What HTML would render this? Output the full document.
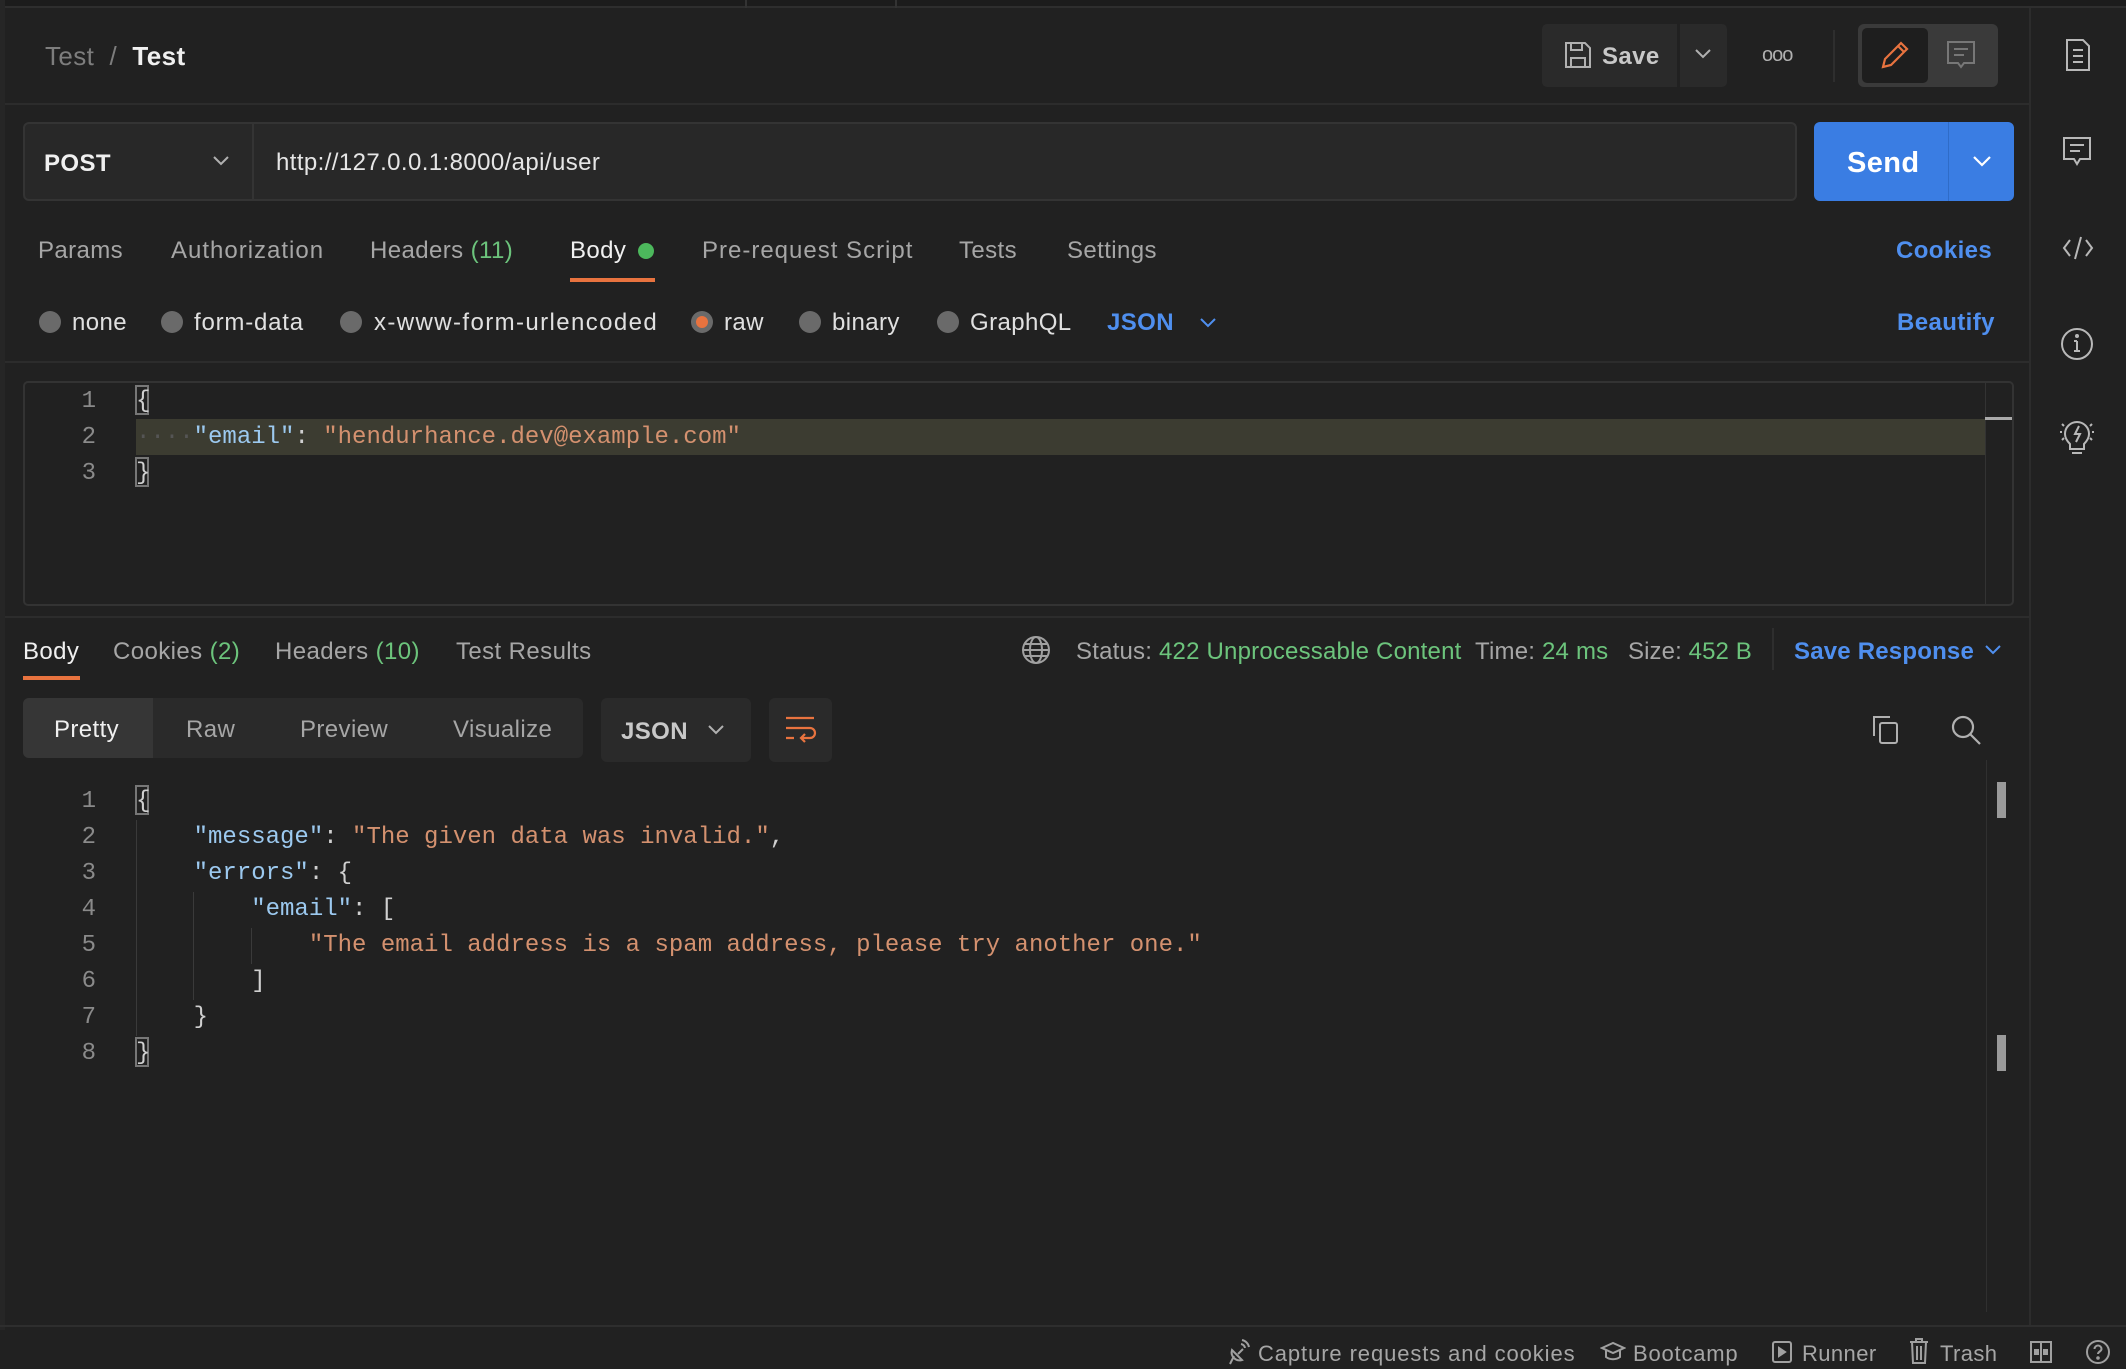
<!DOCTYPE html>
<html><head><meta charset="utf-8"><style>
*{margin:0;padding:0;box-sizing:border-box}
body{width:2126px;height:1368px;background:#212121;position:relative;overflow:hidden;font-family:"Liberation Sans",sans-serif;color:#a6a6a6}
.a{position:absolute;white-space:nowrap}
.t{position:absolute;white-space:nowrap;font-size:24px;line-height:30px;margin-top:2px;letter-spacing:0.4px}
.w{color:#f0f0f0}
.g{color:#6cc47c}
.b{color:#4f8fef}
.m{font-family:"Liberation Mono",monospace;font-size:24px;line-height:36px;position:absolute;white-space:pre;margin-top:3px}
.k{color:#9cc9ef}.s{color:#d4916f}.p{color:#d0d0d0}
.ln{position:absolute;width:60px;text-align:right;font-family:"Liberation Mono",monospace;font-size:24px;line-height:36px;color:#8a8a8a;left:36px;margin-top:3px}
.rd{position:absolute;width:22px;height:22px;border-radius:50%;background:#6a6a6a}
svg{position:absolute}
</style></head><body>
<div class="a" style="left:0;top:0;width:2126px;height:8px;border-bottom:2px solid #2e2e2e;background:#1c1c1c"></div>
<div class="a" style="left:745px;top:0;width:2px;height:8px;background:#333"></div>
<div class="a" style="left:895px;top:0;width:2px;height:8px;background:#333"></div>
<div class="a" style="left:0;top:0;width:5px;height:1330px;background:#262626"></div>
<div class="t" style="left:45px;top:39px;color:#7d7d7d;font-size:26px">Test&nbsp;&nbsp;/&nbsp;&nbsp;<span class="w" style="font-weight:bold">Test</span></div>
<div class="a" style="left:1542px;top:24px;width:135px;height:63px;background:#2a2a2a;border-radius:5px 0 0 5px"></div>
<div class="a" style="left:1680px;top:24px;width:47px;height:63px;background:#2a2a2a;border-radius:0 5px 5px 0"></div>
<svg style="left:1563px;top:40px" width="30" height="30" viewBox="0 0 30 30" fill="none" stroke="#b0b0b0" stroke-width="2"><path d="M3 3h19l5 5v19H3z M8 3v7h11V3 M8 27v-9h14v9"/></svg>
<div class="t" style="left:1602px;top:40px;color:#c8c8c8;font-weight:bold">Save</div>
<svg style="left:1693px;top:47px" width="20" height="14" viewBox="0 0 20 14" fill="none" stroke="#b0b0b0" stroke-width="2"><path d="M3 3l7 7 7-7"/></svg>
<div class="t" style="left:1762px;top:38px;font-size:20px;color:#b0b0b0;letter-spacing:-1px">ooo</div>
<div class="a" style="left:1833px;top:30px;width:2px;height:52px;background:#2e2e2e"></div>
<div class="a" style="left:1858px;top:24px;width:140px;height:63px;background:#3a3a3a;border-radius:6px"></div>
<div class="a" style="left:1862px;top:28px;width:66px;height:55px;background:#1e1e1e;border-radius:5px"></div>
<svg style="left:1878px;top:38px" width="34" height="34" viewBox="0 0 34 34" fill="none" stroke="#e8733f" stroke-width="2.2"><path d="M5 29l2-8L23 5l6 6-16 16z M20 8l6 6"/></svg>
<svg style="left:1946px;top:40px" width="30" height="32" viewBox="0 0 30 32" fill="none" stroke="#777" stroke-width="2"><path d="M2 2h26v21H18l-3 4-3-4H2z M8 9h14 M8 15h10"/></svg>
<div class="a" style="left:5px;top:103px;width:2025px;height:2px;background:#2c2c2c"></div>
<div class="a" style="left:2029px;top:8px;width:2px;height:1318px;background:#2c2c2c"></div>
<svg style="left:2063px;top:38px" width="30" height="34" viewBox="0 0 30 34" fill="none" stroke="#b8b8b8" stroke-width="2"><path d="M4 2h16l6 6v24H4z M10 12h10 M10 18h10 M10 24h10"/></svg>
<svg style="left:2062px;top:136px" width="30" height="34" viewBox="0 0 30 34" fill="none" stroke="#b8b8b8" stroke-width="2"><path d="M2 2h26v21H18l-3 5-3-5H2z M8 9h14 M8 15h10"/></svg>
<svg style="left:2062px;top:234px" width="32" height="28" viewBox="0 0 32 28" fill="none" stroke="#b8b8b8" stroke-width="2"><path d="M8 6L2 14l6 8 M24 6l6 8-6 8 M19 3l-6 22"/></svg>
<svg style="left:2060px;top:327px" width="34" height="34" viewBox="0 0 34 34" fill="none" stroke="#b8b8b8" stroke-width="2"><circle cx="17" cy="17" r="15"/><path d="M17 14v10 M14 24h6 M14 14h3"/><circle cx="17" cy="9" r="1" fill="#b8b8b8"/></svg>
<svg style="left:2058px;top:418px" width="38" height="40" viewBox="0 0 38 40" fill="none" stroke="#b8b8b8" stroke-width="2"><path d="M12 26c-3-3-5-6-5-10a12 12 0 0124 0c0 4-2 7-5 10v5H12z M14 35h10 M21 8l-4 8h5l-4 8 M2 14h2 M34 14h2 M4 6l2 2 M34 6l-2 2 M4 22l2-2 M34 22l-2-2"/></svg>
<div class="a" style="left:23px;top:122px;width:1774px;height:79px;background:#282828;border:2px solid #343434;border-radius:6px"></div>
<div class="a" style="left:252px;top:124px;width:2px;height:75px;background:#343434"></div>
<div class="t w" style="left:44px;top:147px;font-weight:bold">POST</div>
<svg style="left:211px;top:154px" width="20" height="14" viewBox="0 0 20 14" fill="none" stroke="#b0b0b0" stroke-width="2"><path d="M3 3l7 7 7-7"/></svg>
<div class="t" style="left:276px;top:146px;color:#e6e6e6">http://127.0.0.1:8000/api/user</div>
<div class="a" style="left:1814px;top:122px;width:200px;height:79px;background:#3a7de3;border-radius:6px"></div>
<div class="a" style="left:1948px;top:122px;width:1px;height:79px;background:#2f6cc8"></div>
<div class="t" style="left:1847px;top:146px;color:#fff;font-weight:bold;font-size:29px">Send</div>
<svg style="left:1971px;top:154px" width="22" height="14" viewBox="0 0 22 14" fill="none" stroke="#fff" stroke-width="2.2"><path d="M3 3l8 8 8-8"/></svg>
<div class="t" style="left:38px;top:234px">Params</div>
<div class="t" style="left:171px;top:234px;letter-spacing:1px">Authorization</div>
<div class="t" style="left:370px;top:234px">Headers <span class="g">(11)</span></div>
<div class="t w" style="left:570px;top:234px">Body</div>
<div class="a" style="left:638px;top:243px;width:16px;height:16px;border-radius:50%;background:#4cb85c"></div>
<div class="a" style="left:570px;top:278px;width:85px;height:4px;background:#e8733f"></div>
<div class="t" style="left:702px;top:234px;letter-spacing:1px">Pre-request Script</div>
<div class="t" style="left:959px;top:234px">Tests</div>
<div class="t" style="left:1067px;top:234px">Settings</div>
<div class="t b" style="left:1896px;top:234px;font-weight:bold">Cookies</div>
<div class="rd" style="left:39px;top:311px"></div><div class="t" style="left:72px;top:306px;color:#e0e0e0">none</div>
<div class="rd" style="left:161px;top:311px"></div><div class="t" style="left:194px;top:306px;color:#e0e0e0;letter-spacing:0.8px">form-data</div>
<div class="rd" style="left:340px;top:311px"></div><div class="t" style="left:374px;top:306px;color:#e0e0e0;letter-spacing:1.4px">x-www-form-urlencoded</div>
<div class="rd" style="left:691px;top:311px"></div><div class="a" style="left:696px;top:316px;width:12px;height:12px;border-radius:50%;background:#e8733f"></div><div class="t" style="left:724px;top:306px;color:#e0e0e0">raw</div>
<div class="rd" style="left:799px;top:311px"></div><div class="t" style="left:832px;top:306px;color:#e0e0e0">binary</div>
<div class="rd" style="left:937px;top:311px"></div><div class="t" style="left:970px;top:306px;color:#e0e0e0">GraphQL</div>
<div class="t b" style="left:1107px;top:306px;font-weight:bold">JSON</div>
<svg style="left:1198px;top:316px" width="20" height="14" viewBox="0 0 20 14" fill="none" stroke="#4f8fef" stroke-width="2"><path d="M3 3l7 7 7-7"/></svg>
<div class="t b" style="left:1897px;top:306px;font-weight:bold">Beautify</div>
<div class="a" style="left:5px;top:361px;width:2025px;height:2px;background:#2c2c2c"></div>
<div class="a" style="left:23px;top:381px;width:1991px;height:225px;border:2px solid #333;border-radius:5px"></div>
<div class="a" style="left:1985px;top:383px;width:1px;height:221px;background:#333"></div>
<div class="a" style="left:1985px;top:417px;width:27px;height:3px;background:#aaa"></div>
<div class="a" style="left:136px;top:419px;width:1849px;height:36px;background:#3c3c31"></div>
<div class="ln" style="top:381px">1</div><div class="ln" style="top:417px">2</div><div class="ln" style="top:453px">3</div>
<div class="a" style="left:135px;top:385px;width:14px;height:30px;border:2px solid #777"></div>
<div class="a" style="left:135px;top:457px;width:14px;height:30px;border:2px solid #777"></div>
<div class="m p" style="left:136px;top:381px">{</div>
<div class="m" style="left:136px;top:417px"><span style="color:#555">····</span><span class="k">"email"</span><span class="p">: </span><span class="s">"hendurhance.dev@example.com"</span></div>
<div class="m p" style="left:136px;top:453px">}</div>
<div class="a" style="left:5px;top:616px;width:2025px;height:2px;background:#2c2c2c"></div>
<div class="t w" style="left:23px;top:635px">Body</div>
<div class="a" style="left:23px;top:676px;width:57px;height:4px;background:#e8733f"></div>
<div class="t" style="left:113px;top:635px">Cookies <span class="g">(2)</span></div>
<div class="t" style="left:275px;top:635px">Headers <span class="g">(10)</span></div>
<div class="t" style="left:456px;top:635px">Test Results</div>
<svg style="left:1021px;top:635px" width="30" height="30" viewBox="0 0 30 30" fill="none" stroke="#a0a0a0" stroke-width="2"><circle cx="15" cy="15" r="13"/><ellipse cx="15" cy="15" rx="6" ry="13"/><path d="M2 15h26 M4 9h22 M4 21h22"/></svg>
<div class="t" style="left:1076px;top:635px;letter-spacing:0.2px">Status: <span class="g">422 Unprocessable Content</span></div>
<div class="t" style="left:1475px;top:635px;letter-spacing:0.2px">Time: <span class="g">24 ms</span></div>
<div class="t" style="left:1628px;top:635px;letter-spacing:0.1px">Size: <span class="g">452 B</span></div>
<div class="a" style="left:1772px;top:628px;width:2px;height:42px;background:#2e2e2e"></div>
<div class="t b" style="left:1794px;top:635px;font-weight:bold;letter-spacing:0.2px">Save Response</div>
<svg style="left:1983px;top:643px" width="20" height="14" viewBox="0 0 20 14" fill="none" stroke="#4f8fef" stroke-width="2"><path d="M3 3l7 7 7-7"/></svg>
<div class="a" style="left:23px;top:698px;width:560px;height:60px;background:#2a2a2a;border-radius:6px"></div>
<div class="a" style="left:23px;top:698px;width:130px;height:60px;background:#363636;border-radius:6px 0 0 6px"></div>
<div class="t w" style="left:54px;top:713px">Pretty</div>
<div class="t" style="left:186px;top:713px">Raw</div>
<div class="t" style="left:300px;top:713px">Preview</div>
<div class="t" style="left:453px;top:713px">Visualize</div>
<div class="a" style="left:601px;top:698px;width:150px;height:64px;background:#2a2a2a;border-radius:6px"></div>
<div class="t" style="left:621px;top:715px;color:#c8c8c8;font-weight:bold">JSON</div>
<svg style="left:706px;top:723px" width="20" height="14" viewBox="0 0 20 14" fill="none" stroke="#b0b0b0" stroke-width="2"><path d="M3 3l7 7 7-7"/></svg>
<div class="a" style="left:769px;top:698px;width:63px;height:64px;background:#2a2a2a;border-radius:6px"></div>
<svg style="left:784px;top:714px" width="34" height="34" viewBox="0 0 34 34" fill="none" stroke="#e8733f" stroke-width="2.2"><path d="M2 4h28 M2 14h24a5 5 0 010 10h-8 M21 20l-4 4 4 4 M2 24h8"/></svg>
<svg style="left:1871px;top:714px" width="30" height="32" viewBox="0 0 30 32" fill="none" stroke="#b0b0b0" stroke-width="2"><path d="M3 22V3h16"/><rect x="9" y="9" width="17" height="20" rx="2"/></svg>
<svg style="left:1950px;top:714px" width="32" height="32" viewBox="0 0 32 32" fill="none" stroke="#b0b0b0" stroke-width="2.2"><circle cx="13" cy="13" r="10"/><path d="M20 20l10 10"/></svg>
<div class="a" style="left:1986px;top:760px;width:1px;height:552px;background:#303030"></div>
<div class="a" style="left:1997px;top:782px;width:9px;height:36px;background:#9a9a9a"></div>
<div class="a" style="left:1997px;top:1035px;width:9px;height:36px;background:#9a9a9a"></div>
<div class="ln" style="top:781px">1</div><div class="ln" style="top:817px">2</div><div class="ln" style="top:853px">3</div><div class="ln" style="top:889px">4</div><div class="ln" style="top:925px">5</div><div class="ln" style="top:961px">6</div><div class="ln" style="top:997px">7</div><div class="ln" style="top:1033px">8</div>
<div class="a" style="left:135px;top:785px;width:14px;height:30px;border:2px solid #777"></div>
<div class="a" style="left:135px;top:1037px;width:14px;height:30px;border:2px solid #777"></div>
<div class="a" style="left:136px;top:820px;width:1px;height:216px;background:#3a3a3a"></div>
<div class="a" style="left:193px;top:892px;width:1px;height:108px;background:#3a3a3a"></div>
<div class="a" style="left:251px;top:928px;width:1px;height:36px;background:#3a3a3a"></div>
<div class="m p" style="left:136px;top:781px">{</div>
<div class="m p" style="left:136px;top:817px">    <span class="k">"message"</span>: <span class="s">"The given data was invalid."</span>,</div>
<div class="m p" style="left:136px;top:853px">    <span class="k">"errors"</span>: {</div>
<div class="m p" style="left:136px;top:889px">        <span class="k">"email"</span>: [</div>
<div class="m p" style="left:136px;top:925px">            <span class="s">"The email address is a spam address, please try another one."</span></div>
<div class="m p" style="left:136px;top:961px">        ]</div>
<div class="m p" style="left:136px;top:997px">    }</div>
<div class="m p" style="left:136px;top:1033px">}</div>
<div class="a" style="left:0;top:1325px;width:2126px;height:2px;background:#2e2e2e"></div>
<svg style="left:1226px;top:1338px" width="24" height="28" viewBox="0 0 24 28" fill="none" stroke="#a0a0a0" stroke-width="2"><path d="M4 26l4-8 M6 12a8 8 0 0010 10z M12 16l5-5 M15 6a5 5 0 014 4 M16 2a9 9 0 017 7"/></svg>
<div class="t" style="left:1258px;top:1337px;font-size:22px;letter-spacing:0.9px">Capture requests and cookies</div>
<svg style="left:1600px;top:1341px" width="26" height="22" viewBox="0 0 26 22" fill="none" stroke="#a0a0a0" stroke-width="2"><path d="M2 7l11-5 11 5-11 5z M6 9v7c4 3 10 3 14 0V9"/></svg>
<div class="t" style="left:1633px;top:1337px;font-size:22px;letter-spacing:0.8px">Bootcamp</div>
<svg style="left:1771px;top:1340px" width="22" height="24" viewBox="0 0 22 24" fill="none" stroke="#a0a0a0" stroke-width="2"><rect x="2" y="2" width="18" height="20" rx="2"/><path d="M8 8l6 4-6 4z" fill="#a0a0a0"/></svg>
<div class="t" style="left:1802px;top:1337px;font-size:22px">Runner</div>
<svg style="left:1908px;top:1337px" width="22" height="28" viewBox="0 0 22 28" fill="none" stroke="#a0a0a0" stroke-width="2"><path d="M2 5h18 M8 5V2h6v3 M4 5l1 21h12l1-21 M9 9v14 M13 9v14"/></svg>
<div class="t" style="left:1940px;top:1337px;font-size:22px">Trash</div>
<svg style="left:2029px;top:1340px" width="24" height="24" viewBox="0 0 24 24" fill="none" stroke="#a0a0a0" stroke-width="2"><rect x="2" y="2" width="20" height="20"/><path d="M12 2v20"/><rect x="6" y="10" width="3" height="4" fill="#a0a0a0"/><rect x="15" y="10" width="3" height="4" fill="#a0a0a0"/></svg>
<svg style="left:2085px;top:1339px" width="26" height="26" viewBox="0 0 26 26" fill="none" stroke="#a0a0a0" stroke-width="2"><circle cx="13" cy="13" r="11"/><path d="M9.5 10a3.5 3.5 0 117 0c0 2.5-3.5 2.5-3.5 5"/><circle cx="13" cy="19" r="0.8" fill="#a0a0a0"/></svg>
</body></html>
